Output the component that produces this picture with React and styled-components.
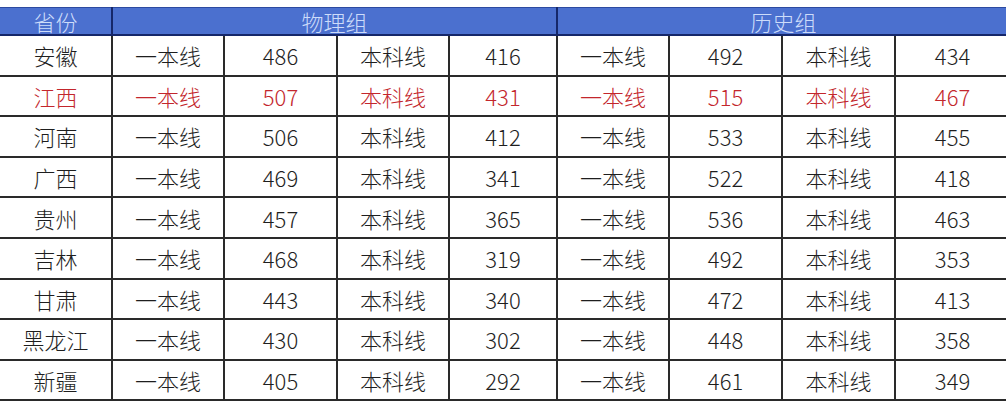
import styled, { createGlobalStyle } from "styled-components";

const GlobalStyle = createGlobalStyle`
  html, body {
    margin: 0;
    padding: 0;
    background: #fff;
  }
  body {
    font-family: "Noto Sans CJK SC", "Noto Sans", sans-serif;
  }
`;

const Page = styled.div`
  padding-top: 7px;
  width: 1006px;
`;

const Table = styled.table`
  width: 1006px;
  border-collapse: collapse;
  table-layout: fixed;
`;

const HeadCell = styled.th`
  height: 26px;
  padding: 0;
  background: #4b70cf;
  color: #cddcfa;
  font-size: 22px;
  font-weight: 300;
  line-height: 26px;
  text-align: center;
  border-top: 1px solid #2c4aa0;
  border-bottom: 2px solid #15276a;
  border-left: 2px solid #15276a;
  &:first-child {
    border-left: none;
  }
  &:last-child {
    border-right: 2px solid #15276a;
  }
`;

const Cell = styled.td`
  height: 38.6px;
  padding: 0;
  font-size: 22px;
  font-weight: 300;
  line-height: 24px;
  text-align: center;
  color: ${(p) => (p.$red ? "#c3262c" : "#1e1e1e")};
  border-bottom: 2px solid #2a2a2a;
  border-left: 2px solid #2a2a2a;
  &:first-child {
    border-left: none;
  }
  &:last-child {
    border-right: 2px solid #2a2a2a;
  }
`;

const widths = [112, 112, 113, 112, 108, 112, 113, 113, 115];

const rows = [
  ["安徽", 486, 416, 492, 434],
  ["江西", 507, 431, 515, 467, true],
  ["河南", 506, 412, 533, 455],
  ["广西", 469, 341, 522, 418],
  ["贵州", 457, 365, 536, 463],
  ["吉林", 468, 319, 492, 353],
  ["甘肃", 443, 340, 472, 413],
  ["黑龙江", 430, 302, 448, 358],
  ["新疆", 405, 292, 461, 349],
];

export default function App() {
  return (
    <Page>
      <GlobalStyle />
      <Table>
        <colgroup>
          {widths.map((w, i) => (
            <col key={i} style={{ width: w }} />
          ))}
        </colgroup>
        <thead>
          <tr>
            <HeadCell>省份</HeadCell>
            <HeadCell colSpan={4}>物理组</HeadCell>
            <HeadCell colSpan={4}>历史组</HeadCell>
          </tr>
        </thead>
        <tbody>
          {rows.map(([name, a, b, c, d, red]) => (
            <tr key={name}>
              <Cell $red={red}>{name}</Cell>
              <Cell $red={red}>一本线</Cell>
              <Cell $red={red}>{a}</Cell>
              <Cell $red={red}>本科线</Cell>
              <Cell $red={red}>{b}</Cell>
              <Cell $red={red}>一本线</Cell>
              <Cell $red={red}>{c}</Cell>
              <Cell $red={red}>本科线</Cell>
              <Cell $red={red}>{d}</Cell>
            </tr>
          ))}
        </tbody>
      </Table>
    </Page>
  );
}
